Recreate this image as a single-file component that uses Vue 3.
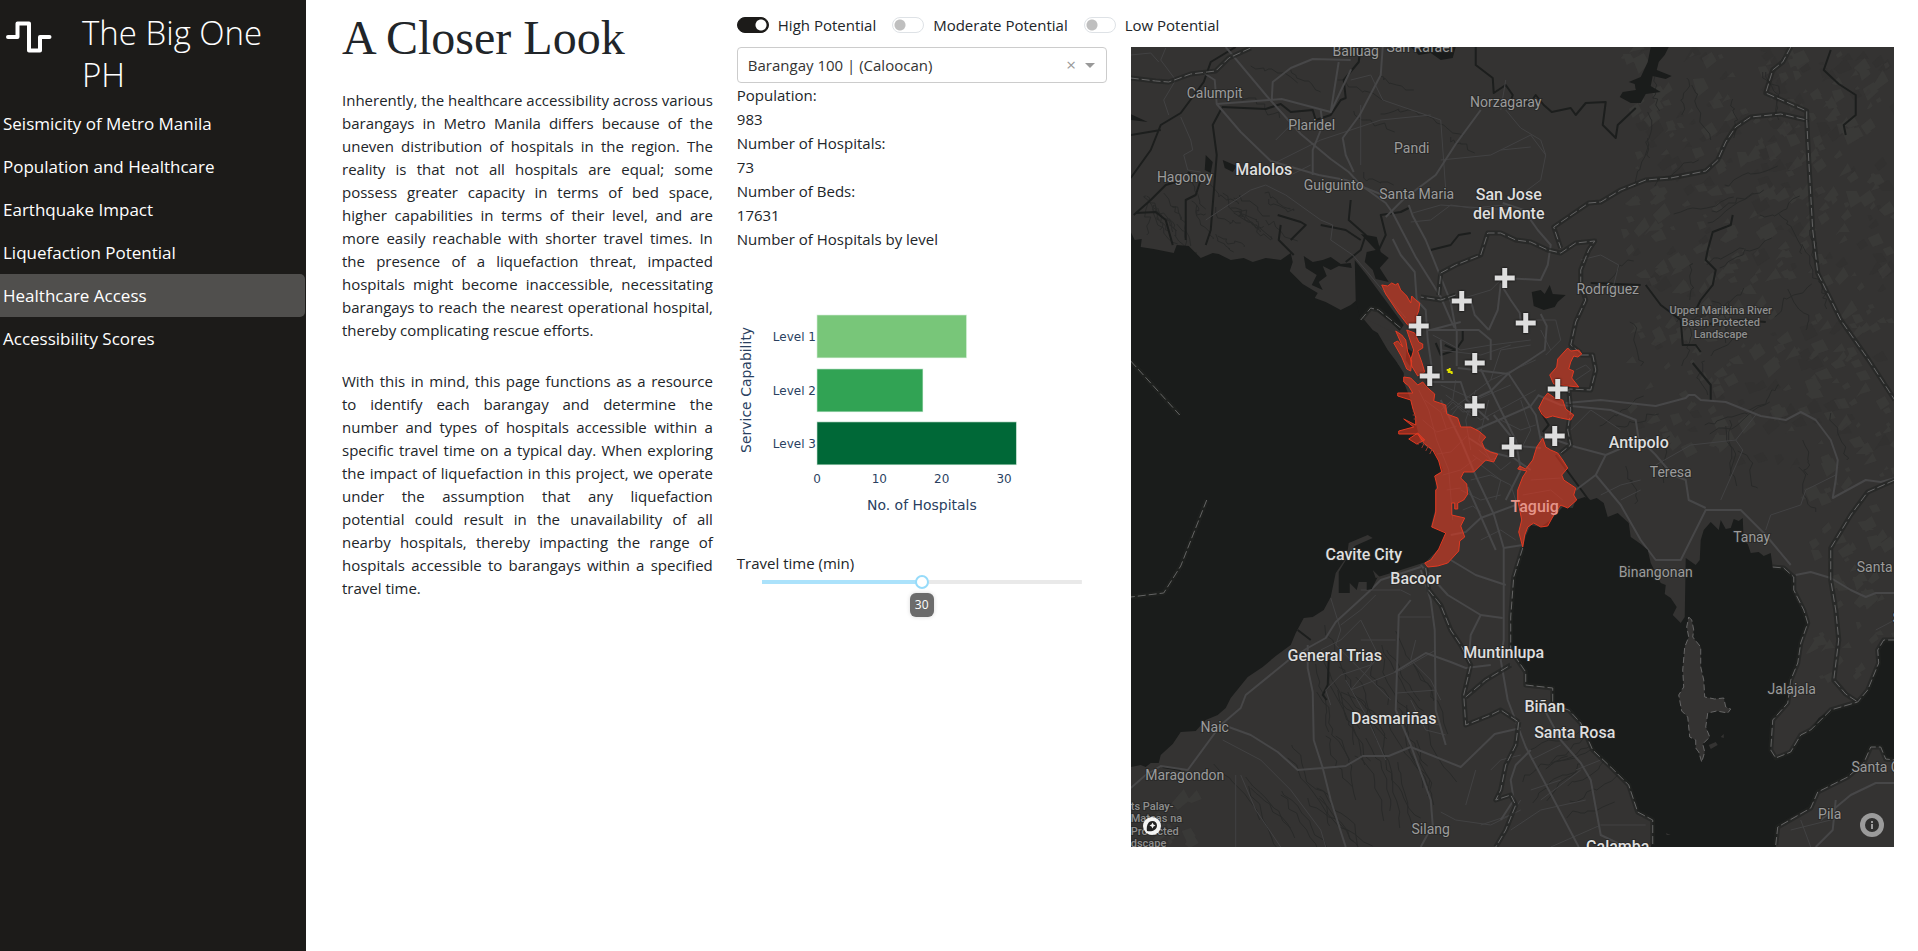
<script setup>
import { ref, computed } from 'vue'

const navItems = [
  'Seismicity of Metro Manila',
  'Population and Healthcare',
  'Earthquake Impact',
  'Liquefaction Potential',
  'Healthcare Access',
  'Accessibility Scores',
]
const activeItem = 'Healthcare Access'

const paragraphs = [
  [
    'Inherently, the healthcare accessibility across various',
    'barangays in Metro Manila differs because of the',
    'uneven distribution of hospitals in the region. The',
    'reality is that not all hospitals are equal; some',
    'possess greater capacity in terms of bed space,',
    'higher capabilities in terms of their level, and are',
    'more easily reachable with shorter travel times. In',
    'the presence of a liquefaction threat, impacted',
    'hospitals might become inaccessible, necessitating',
    'barangays to reach the nearest operational hospital,',
    'thereby complicating rescue efforts.',
  ],
  [
    'With this in mind, this page functions as a resource',
    'to identify each barangay and determine the',
    'number and types of hospitals accessible within a',
    'specific travel time on a typical day. When exploring',
    'the impact of liquefaction in this project, we operate',
    'under the assumption that any liquefaction',
    'potential could result in the unavailability of all',
    'nearby hospitals, thereby impacting the range of',
    'hospitals accessible to barangays within a specified',
    'travel time.',
  ],
]

const toggles = ref([
  { id: 'high', label: 'High Potential', on: true },
  { id: 'moderate', label: 'Moderate Potential', on: false },
  { id: 'low', label: 'Low Potential', on: false },
])

const barangay = ref('Barangay 100 | (Caloocan)')
const travelTime = ref(30)
const travelShare = computed(() => (travelTime.value / 60) * 100 + '%')

const stats = [
  { label: 'Population:', value: '983' },
  { label: 'Number of Hospitals:', value: '73' },
  { label: 'Number of Beds:', value: '17631' },
]

const bars = [
  { label: 'Level 1', count: 24, y: 64, fill: '#78c679' },
  { label: 'Level 2', count: 17, y: 118, fill: '#31a354' },
  { label: 'Level 3', count: 32, y: 171, fill: '#006837' },
]
const ticks = [0, 10, 20, 30]
const unit = 6.24

const cities = [
  { t: 'Malolos', x: 1263, y: 175 },
  { t: 'San Jose', x: 1508, y: 200 },
  { t: 'del Monte', x: 1508, y: 219 },
  { t: 'Antipolo', x: 1638, y: 448 },
  { t: 'Taguig', x: 1534, y: 512, dim: true },
  { t: 'Cavite City', x: 1363, y: 560 },
  { t: 'Bacoor', x: 1415, y: 584 },
  { t: 'General Trias', x: 1334, y: 661 },
  { t: 'Muntinlupa', x: 1503, y: 658 },
  { t: 'Dasmariñas', x: 1393, y: 724 },
  { t: 'Biñan', x: 1544, y: 712 },
  { t: 'Santa Rosa', x: 1574, y: 738 },
  { t: 'Calamba', x: 1617, y: 852 },
]
const towns = [
  { t: 'Baliuag', x: 1355, y: 56 },
  { t: 'San Rafael', x: 1419, y: 52 },
  { t: 'Calumpit', x: 1214, y: 98 },
  { t: 'Norzagaray', x: 1505, y: 107 },
  { t: 'Plaridel', x: 1311, y: 130 },
  { t: 'Pandi', x: 1411, y: 153 },
  { t: 'Hagonoy', x: 1184, y: 182 },
  { t: 'Guiguinto', x: 1333, y: 190 },
  { t: 'Santa Maria', x: 1416, y: 199 },
  { t: 'Rodríguez', x: 1607, y: 294 },
  { t: 'Teresa', x: 1670, y: 477 },
  { t: 'Tanay', x: 1751, y: 542 },
  { t: 'Binangonan', x: 1655, y: 577 },
  { t: 'Santa', x: 1874, y: 572 },
  { t: 'S', x: 1896, y: 623 },
  { t: 'Jalajala', x: 1791, y: 694 },
  { t: 'Santa C', x: 1875, y: 772 },
  { t: 'Pila', x: 1829, y: 819 },
  { t: 'Naic', x: 1214, y: 732 },
  { t: 'Maragondon', x: 1184, y: 780 },
  { t: 'Silang', x: 1430, y: 834 },
]
const parks = [
  { t: 'Upper Marikina River', x: 1720, y: 314 },
  { t: 'Basin Protected', x: 1720, y: 326 },
  { t: 'Landscape', x: 1720, y: 338 },
]
const palay = [
  { t: 'ts Palay-', y: 810 },
  { t: 'Mataas na', y: 822 },
  { t: 'Protected', y: 835 },
  { t: 'dscape', y: 847 },
]

const hospitals = [
  [1504, 278], [1461, 301], [1418, 326], [1525, 323], [1474, 363],
  [1429, 376], [1557, 389], [1474, 406], [1554, 436], [1511, 447],
]

const bay = 'M1130 232 1134 240 1141 239 1140 247 1153 249 1173 253 1176 245 1188 246 1200 258 1212 253 1218 254 1230 260 1243 258 1252 262 1265 258 1280 260 1290 253 1292 262 1289 271 1302 284 1317 293 1314 298 1325 302 1340 310 1350 305 1356 300 1362 318 1372 330 1377 333 1387 350 1396 362 1403 373 1403 382 1410 400 1415 423 1420 443 1435 453 1442 470 1435 475 1435 507 1430 527 1445 532 1440 547 1425 562 1397 571 1377 577 1371 589 1366 590 1366 582 1358 582 1356 590 1349 583 1349 593 1338 593 1338 572 1350 552 1354 546 1372 538 1367 535 1348 543 1346 557 1335 573 1330 597 1323 610 1312 617 1303 618 1295 633 1290 645 1275 656 1262 667 1247 677 1230 698 1225 708 1217 715 1205 720 1195 731 1180 732 1172 744 1160 755 1158 763 1150 763 1145 767 1140 765 1130 767Z'
const lake = 'M1522 548 1513 577 1510 617 1510 650 1525 672 1525 685 1552 688 1550 705 1568 710 1580 723 1592 750 1610 767 1628 785 1637 812 1652 820 1652 840 1650 847H1775L1777 827 1790 818 1810 808 1817 792 1847 777 1863 763 1870 747 1880 747 1885 759 1894 760V640H1883L1877 650 1878 663 1867 690 1857 702 1847 706 1830 710 1818 718 1810 730 1800 735 1790 752 1775 758 1770 750 1772 720 1787 703 1790 680 1797 663 1800 643 1807 623 1803 610 1796 600 1793 590 1793 577 1783 568 1772 567 1770 553 1763 556 1758 552 1750 553 1747 544 1743 541 1742 518 1738 521 1733 519 1730 528 1725 529 1720 520 1718 530 1710 522 1703 530 1700 540 1699 560 1695 565 1685 558 1684 617 1680 623 1672 615 1676 607 1670 598 1664 594 1665 585 1660 583 1650 563 1647 550 1640 544 1630 537 1628 523 1617 513 1607 517 1603 503 1596 498 1590 500 1584 497 1575 500 1572 508 1562 507 1550 520 1540 527 1530 525 1525 536Z'
const talim = 'M1688 617 1691 620 1693 630 1692 637 1700 647 1700 667 1703 680 1704 697 1714 699 1723 698 1725 707 1730 709 1727 713 1716 711 1707 713 1705 727 1709 737 1702 744 1704 752 1701 762 1698 752 1695 748 1695 740 1689 737 1687 717 1681 711 1678 695 1683 687 1682 670 1684 647 1688 637 1686 627Z'

const liquefaction = [
  'M1381 285 1387 286 1391 283 1395 285 1397 283 1400 290 1406 296 1410 303 1411 296 1415 300 1419 303 1418 311 1415 318 1416 326 1407 325 1397 312 1385 294Z',
  'M1406 330 1414 333 1418 342 1422 344 1422 348 1417 351 1421 362 1424 372 1417 376 1411 366 1410 360 1413 350 1410 342Z',
  'M1395 331 1401 335 1405 340 1407 352 1411 361 1410 371 1406 369 1401 357 1393 343 1397 341 1402 347Z',
  'M1403 377 1410 378 1417 385 1422 382 1427 388 1434 394 1433 401 1445 405 1446 414 1457 418 1460 427 1470 427 1478 431 1485 437 1481 442 1484 449 1490 452 1497 454 1493 462 1485 460 1479 466 1473 472 1463 472 1460 478 1466 484 1467 494 1463 500 1457 503 1457 509 1454 509 1454 503 1451 503 1451 515 1464 518 1460 526 1464 537 1459 541 1458 551 1447 563 1437 566 1427 567 1424 563 1430 560 1438 549 1445 533 1431 527 1435 512V490L1437 488 1434 476 1441 472 1438 461 1432 450 1424 444 1417 434 1398 434V431L1413 427 1403 419 1415 425V417L1412 408 1410 400 1397 396V393H1412L1408 386 1403 382Z',
  'M1417 433 1424 440 1416 444 1408 439Z',
  'M1567 348 1570 351 1578 350 1581 354 1577 357 1573 356 1570 362 1568 369 1573 371 1571 378 1578 387 1568 386 1553 384 1549 375 1556 367 1557 359Z',
  'M1547 393 1554 398 1562 400 1565 409 1573 415 1570 420 1560 418 1552 416 1545 418 1541 414 1538 408 1543 398Z',
  'M1542 438 1545 447 1550 450 1557 453 1562 460 1567 468 1561 475 1563 480 1575 488 1573 495 1576 500 1567 508 1560 505 1553 515 1547 526 1540 527 1533 523 1527 527 1524 535 1522 547 1518 532 1521 520 1517 500 1517 490 1522 477 1526 471 1517 469 1519 466 1525 469 1532 460 1536 447Z',
]

const majorRoads = [
  'M1225 47 1266 96 1300 134 1330 159 1348 172 1360 185 1385 203 1392 213 1415 257 1440 297 1450 320 1454 328',
  'M1203 73 1214 80 1216 104 1240 132 1270 161 1318 175 1345 180 1382 195',
  'M1216 104 1281 99 1330 112M1330 112 1350 70 1330 112 1338 62M1350 60 1312 59 1290 68 1272 82 1271 100M1382 47 1380 75 1359 115 1342 138 1345 155 1353 172',
  'M1312 175V150L1322 125 1320 110M1480 110 1455 144 1435 175 1415 190 1402 200 1385 217',
  'M1408 205 1412 216 1425 240 1450 302 1455 329M1392 239 1400 255 1414 272 1416 300 1425 310 1427 340 1432 374',
  'M1460 322 1430 330M1427 330H1478L1490 340V360',
  'M1488 330 1474 315 1470 300M1504 278 1540 280 1547 265 1550 245 1537 230 1523 210 1502 203',
  'M1488 330 1497 310 1500 284 1510 300 1519 313 1520 322M1540 314 1546 326 1544 350 1529 360 1507 374 1490 391 1475 398',
  'M1457 368 1508 374 1535 415 1540 440M1431 382H1460L1466 400 1488 420M1456 330V366M1440 340 1442 380',
  'M1480 369 1500 410 1515 440 1520 470 1505 500M1475 430 1530 406 1538 395',
  'M1440 400 1460 440 1476 478 1493 514 1503 548V640L1500 660 1507 700 1525 747 1548 790 1578 847',
  'M1503 548 1522 545M1467 487 1495 550M1450 535 1465 532 1480 518 1515 505',
  'M1468 438 1490 452 1513 458 1530 470M1493 415 1518 446 1540 448',
  'M1370 590 1380 580 1420 567M1410 600 1398 615 1395 710 1410 745 1430 800 1432 825 1420 847',
  'M1370 590 1335 622 1325 638 1307 648 1288 660 1245 695 1240 708 1220 725 1187 770 1160 766 1145 775 1130 788',
  'M1307 645V668L1312 692 1313 740 1322 768 1330 800 1345 847M1228 727 1250 735 1277 752 1297 770 1322 768 1345 766 1362 756 1388 756 1410 747 1460 767 1494 734 1520 728',
  'M1420 570 1430 600 1434 630 1435 710 1445 745M1450 560 1475 575 1505 585M1420 565 1447 595 1480 615 1502 618',
  'M1480 615 1470 635 1468 660M1394 672 1425 653 1450 662 1465 668 1490 665',
  'M1540 437 1555 440 1575 447 1605 455 1640 440 1655 455 1672 475 1685 480 1688 500 1705 508',
  'M1605 455 1595 475 1575 490M1595 475 1620 505 1640 540 1655 560 1680 560 1690 540 1705 510 1740 510 1765 535 1790 565',
  'M1565 403 1600 400 1655 406 1685 398 1688 395 1694 395 1700 400 1725 402 1745 410 1760 416 1785 420 1800 412 1815 420 1830 440 1837 460 1835 480 1832 498 1865 480 1880 482 1894 478',
  'M1537 395 1560 405 1610 410 1635 420 1638 440',
  'M1545 712 1560 740 1580 763 1590 780 1600 835 1625 847M1530 750 1515 765 1510 780 1513 800 1500 820',
  'M1820 820 1850 795 1875 783 1894 783M1835 800 1832 830 1815 847M1795 575 1810 572 1830 578 1850 590 1865 597 1875 593 1894 593',
]
const minorRoads = [
  'M1165 48 1160 60 1175 80 1163 100 1168 115M1130 55 1150 53 1158 62M1180 117 1190 140 1192 150 1183 155 1187 170 1200 172',
  'M1205 220 1250 190 1265 185 1285 195 1320 220 1332 225 1330 240 1352 255 1365 270 1405 318',
  'M1270 165 1320 140 1380 120 1430 115M1275 140 1290 125M1290 175 1310 165M1350 80 1370 75 1382 100 1440 120 1445 190',
  'M1360 165V105M1412 213 1440 205 1510 210M1410 222 1430 220 1450 205M1440 160 1490 155 1530 135 1545 155 1540 180 1520 195',
  'M1505 110 1520 128 1540 140 1545 155M1505 80 1500 110M1450 205 1470 208 1505 205M1500 150 1530 147',
  'M1432 335 1460 350 1490 345 1530 340M1490 380 1500 350 1530 345M1450 302 1490 290 1500 280',
  'M1440 385 1475 400 1510 385M1445 395 1480 420 1535 390M1450 410 1490 380 1535 360',
  'M1475 390 1465 420 1470 450M1488 400 1478 440 1490 460M1455 380 1452 400 1440 410M1440 350 1480 355 1510 345',
  'M1470 480 1490 475 1510 485 1515 500M1480 465 1500 480 1495 500M1460 490 1480 500 1500 495M1480 540 1500 530 1515 540',
  'M1535 320 1555 320 1560 340 1545 355M1540 330 1550 350M1520 400 1530 430 1520 450M1500 420 1520 430 1535 425',
  'M1580 260 1600 255 1618 265 1613 285 1590 290M1575 380 1590 370 1585 365 1575 370',
  'M1443 412 1452 402 1462 412 1475 410M1449 418 1458 406 1470 416M1472 455 1482 462 1496 458M1478 450 1488 458 1500 470 1510 462M1462 510 1472 506 1480 512',
  'M1418 390 1428 410 1436 440 1448 470 1452 520M1424 400 1440 412 1446 430M1422 420 1436 432 1456 426M1430 455 1450 452 1466 436M1442 475 1460 470 1476 458M1446 490 1460 488M1530 480 1560 478M1522 495 1550 490 1562 500',
  'M1360 590 1400 590 1410 595M1340 625 1360 610 1375 595M1320 650 1340 640 1360 620 1375 650 1370 665 1340 675 1325 690 1330 705',
  'M1330 598 1340 630 1335 645 1390 700M1360 640H1395M1398 617 1430 617M1396 693 1436 690M1410 720 1440 725M1375 660 1350 690 1400 670 1435 650',
  'M1345 680 1365 715 1385 760M1415 640 1410 660 1430 680 1440 700M1410 700 1425 730 1445 735',
  'M1480 825 1510 815 1520 800M1440 812 1455 820 1490 825 1520 810M1490 770 1500 760 1520 755M1465 805 1475 770',
  'M1222 740 1260 760 1290 790 1320 830 1325 847M1235 775V847M1240 775 1255 810 1280 847',
  'M1530 790 1560 780M1540 800 1580 770M1510 830 1540 810 1585 800M1530 760 1560 745M1600 760 1575 770M1550 847 1600 825 1645 825',
  'M1570 430 1590 410 1620 430M1640 490 1620 500M1655 465 1690 445 1735 440 1755 415M1735 440 1742 450 1720 500M1640 480 1620 485 1600 495',
  'M1765 530 1770 515 1800 505 1805 490 1835 475M1875 630 1894 620M1800 820 1810 847M1790 830 1830 820',
]
const rivers = [
  'M1235 47 1210 62 1203 82 1180 113 1160 125 1150 150 1130 178M1130 135 1160 130M1221 108 1212 125 1216 155 1210 230 1205 245',
  'M1221 107 1265 109 1280 104 1290 112 1312 110 1315 120 1330 115 1340 100 1345 98 1343 80 1358 62 1360 47',
  'M1475 47 1475 65 1492 78 1493 93 1505 85 1512 95 1508 107 1530 102 1535 95 1543 105 1551 112 1570 108 1575 115 1585 103 1605 102 1602 125 1615 138 1617 125 1635 108',
  'M1645 285 1660 305 1680 320 1682 345 1695 345 1700 352M1692 363 1710 385 1710 400',
  'M1590 283 1640 285M1732 215 1730 225 1712 232 1707 250 1705 260 1715 270 1712 285 1700 300 1695 310M1700 325 1740 320 1765 322',
  'M1830 50 1823 70 1838 84 1855 95 1855 115 1843 125 1845 135',
  'M1408 208 1400 212 1380 215 1385 235 1378 250M1430 250 1450 245 1458 235 1470 233M1277 215 1300 222 1305 225 1290 240M1280 225 1278 240 1293 255M1350 200 1348 220 1365 235 1360 250 1345 262',
  'M1320 225 1345 230 1360 240M1133 215 1150 200 1165 185 1175 182M1135 213 1155 212 1165 220 1172 245M1187 172 1200 180 1195 195 1185 200 1185 240',
  'M1555 455 1588 500M1540 412 1548 425 1542 432',
  'M1297 630 1310 640M1328 660 1327 685 1322 695 1326 700M1162 767 1180 770',
  'M1444 345 1455 350M1435 343 1440 355 1455 350 1462 340 1462 330',
]
const boundaries = [
  'M1790 47 1782 62 1772 70 1765 93 1806 111V120L1780 114 1750 117 1735 127 1725 142 1717 160 1705 171 1670 178 1645 180 1620 190 1600 202 1588 203 1553 227 1560 248',
  'M1806 120 1808 160 1812 230 1817 273 1840 320 1868 360 1894 400',
  'M1130 78 1155 81 1168 82 1190 74 1215 71 1228 58 1250 48',
  'M1455 295 1440 300 1420 297M1438 295 1440 273 1455 265 1480 255 1487 233 1500 233 1515 240 1530 242 1547 250 1560 253 1575 243 1594 241 1588 250 1580 270 1580 285 1585 300 1575 322 1570 345 1580 353',
  'M1580 355 1592 355 1595 370 1590 390 1568 389 1570 410 1567 430 1570 445 1560 453',
  'M1894 480 1867 492 1850 515 1830 548V580L1835 610 1838 640 1833 680 1845 694 1857 702',
  'M1522 548 1513 577 1510 617V650L1525 672V685L1552 688V705L1568 710 1580 723 1592 750 1610 767 1628 785 1637 812 1652 820V845',
  'M1425 568 1428 590 1440 605 1450 630 1460 645 1470 665 1463 695 1465 725 1490 715 1500 710 1518 722M1465 697 1485 680 1510 665M1518 722 1515 745 1505 765 1500 790 1495 800 1510 795 1515 805 1505 830 1495 847',
  'M1772 567 1783 568 1793 577 1793 590 1803 610 1807 623 1800 643 1797 663 1790 680 1787 703 1772 720 1770 750 1775 758 1790 752 1800 735 1810 730 1830 710 1857 702 1867 690 1878 663 1877 650 1883 640H1894',
  'M1775 845 1777 827 1810 808 1817 792 1847 777 1863 763 1870 747H1880L1885 759 1894 760',
  'M1130 361 1179 415M1206 500 1180 566 1163 593 1130 597',
  'M1360 320 1370 308 1378 310 1400 328',
]

/* Seeded generator, so that the relief and creeks look the same on each load */
let seed = 11
function rnd() {
  seed = (seed * 16807) % 2147483647
  return seed / 2147483647
}
function facets(count, x0, y0, w, h) {
  return Array.from({ length: count }, () => {
    const x = x0 + rnd() * w
    const y = y0 + rnd() * h
    const a = 3 + rnd() * 9
    return `M${x.toFixed()} ${y.toFixed()}l${a.toFixed()} ${(-a * rnd() * 1.6).toFixed()} ${(a * 0.5).toFixed()} ${(a * 0.9).toFixed()} ${(-a).toFixed()} ${(a * rnd()).toFixed()}Z`
  }).join('')
}
function creeks(count, x0, y0, w, h, dx, dy) {
  return Array.from({ length: count }, () => {
    let d = `M${(x0 + rnd() * w).toFixed()} ${(y0 + rnd() * h).toFixed()}l`
    for (let i = 0; i < 9; i++) {
      d += `${(dx + (rnd() - 0.5) * 9).toFixed()} ${(dy + (rnd() - 0.5) * 9).toFixed()} `
    }
    return d
  }).join('')
}
const relief = facets(330, 1620, 50, 270, 400) + facets(60, 1800, 440, 90, 240) + facets(14, 1132, 800, 60, 45)
const deepRelief = facets(130, 1630, 50, 260, 420)
const streams =
  creeks(26, 1620, 60, 240, 420, 1, 5) +
  creeks(18, 1590, 180, 220, 260, 5, -3) +
  creeks(30, 1310, 620, 120, 150, 3, 7) +
  creeks(12, 1210, 740, 110, 60, 5, 6) +
  creeks(12, 1180, 60, 280, 140, 4, 2) +
  creeks(14, 1140, 165, 60, 60, 2, 3) +
  creeks(12, 1210, 190, 60, 50, 3, 2) +
  creeks(10, 1520, 740, 50, 80, 5, -3)
</script>

<template>
  <div class="page">
    <aside class="sidebar">
      <div class="brand">
        <svg class="logo" viewBox="0 0 46 34" aria-hidden="true">
          <path d="M2 17H11.500V3.500H23V30.500H34V17H43.500" />
        </svg>
        <h2>The Big One PH</h2>
      </div>
      <nav>
        <a
          v-for="item in navItems"
          :key="item"
          href="#"
          :class="{ active: item === activeItem }"
        >{{ item }}</a>
      </nav>
    </aside>

    <main>
      <section class="story">
        <h1>A Closer Look</h1>
        <p v-for="(lines, i) in paragraphs" :key="i">
          <span v-for="line in lines" :key="line">{{ line + ' ' }}</span>
        </p>
      </section>

      <section class="explorer">
        <div class="toggles">
          <label v-for="t in toggles" :key="t.id" :for="t.id">
            <input :id="t.id" v-model="t.on" type="checkbox" role="switch">
            <span>{{ t.label }}</span>
          </label>
        </div>

        <div class="panels">
          <div class="details">
            <div class="picker">
              <select v-model="barangay" aria-label="Barangay">
                <option>Barangay 100 | (Caloocan)</option>
              </select>
              <button type="button" aria-label="Clear selection">×</button>
              <svg class="caret" viewBox="0 0 10 5" aria-hidden="true"><path d="M0 0H10L5 5Z" /></svg>
            </div>

            <dl>
              <template v-for="s in stats" :key="s.label">
                <dt>{{ s.label }}</dt>
                <dd>{{ s.value }}</dd>
              </template>
            </dl>
            <div class="caption">Number of Hospitals by level</div>

            <svg class="chart" viewBox="0 0 370 300" role="img" aria-label="Number of hospitals by level">
              <g v-for="b in bars" :key="b.label">
                <rect x="80" :y="b.y" :width="b.count * unit" height="43" :fill="b.fill" />
                <text class="tick" x="79" :y="b.y + 26" text-anchor="end">{{ b.label }}</text>
              </g>
              <text
                v-for="n in ticks"
                :key="n"
                class="tick"
                :x="80 + n * unit"
                y="232"
                text-anchor="middle"
              >{{ n }}</text>
              <text class="axis" x="185" y="259" text-anchor="middle">No. of Hospitals</text>
              <text class="axis" transform="translate(14 139) rotate(-90)" text-anchor="middle">Service Capability</text>
            </svg>

            <label class="caption" for="travel">Travel time (min)</label>
            <div class="slider" :style="{ '--share': travelShare }">
              <input id="travel" v-model.number="travelTime" type="range" min="0" max="60">
              <output for="travel">{{ travelTime }}</output>
            </div>
          </div>

          <div class="map">
            <svg viewBox="1130 47 764 800" preserveAspectRatio="xMidYMid slice" role="img" aria-label="Map of Metro Manila">
              <rect class="land" x="1130" y="47" width="764" height="800" />
              <path class="deep" :d="deepRelief" />
              <path class="relief" :d="relief" />
              <path class="stream" :d="streams" />
              <path class="river" v-for="d in rivers" :key="d" :d="d" />
              <path class="minor" v-for="d in minorRoads" :key="d" :d="d" />
              <path class="major" v-for="d in majorRoads" :key="d" :d="d" />

              <g class="water">
                <path :d="bay" />
                <path :d="lake" />
                <path d="M1410 47 1418 55 1430 53 1440 60 1452 58 1455 47Z" />
                <path d="M1650 47 1668 47 1664 55 1658 62 1656 70 1671 76 1665 79 1652 76 1650 86 1660 92 1645 94 1640 103 1630 103 1619 97 1622 92 1635 90 1634 84 1628 82 1640 77 1647 62Z" />
                <path d="M1531 292 1540 290 1544 294 1549 285 1552 294 1565 295 1557 302 1554 307 1543 310 1533 306Z" />
                <path d="M1360 234 1376 237 1380 252 1388 258 1379 268 1388 282 1375 279 1372 270 1364 262 1366 252 1375 250Z" />
                <path d="M1354 260 1366 275 1403 325 1398 332 1385 322 1372 308 1360 320 1355 300Z" />
                <path d="M1303 256 1312 262 1322 260 1330 257 1340 264 1350 263 1351 268 1338 266 1330 270 1322 266 1326 276 1318 282 1322 290 1311 285 1316 275 1305 268Z" />
                <path d="M1222 160 1236 166 1232 172 1224 168ZM1205 155 1212 162 1210 173 1204 170ZM1130 114 1147 122 1130 120Z" />
                <path d="M1406 348 1412 352 1409 366 1405 360Z" />
              </g>
              <path class="land" :d="talim" />
              <path class="land" d="M1708 745 1715 742 1717 745 1710 749ZM1665 833 1670 835 1666 835ZM1720 737 1723 734 1723 738ZM1372 570 1379 577 1375 578Z" />
              <path class="land" d="M1363 318 1375 310 1390 322 1402 334 1396 334ZM1384 340 1390 341 1405 372 1398 365Z" />
              <path class="coast" :d="talim" />

              <path class="border-shade" v-for="d in boundaries" :key="'s' + d" :d="d" />
              <path class="border" v-for="d in boundaries" :key="d" :d="d" />

              <path class="risk" v-for="d in liquefaction" :key="d" :d="d" />
              <path class="pier" d="M1412 411h5M1412 415h5M1413 419h5M1420 440l-3 5M1424 442l-3 6M1428 445l-3 6M1432 448l-3 6" />
              <path class="selected" d="M1446 370h3v-2M1447 372h4v2M1448 369v3" />

              <g class="town">
                <text v-for="l in towns" :key="l.t + l.x" :x="l.x" :y="l.y">{{ l.t }}</text>
              </g>
              <g class="park">
                <text v-for="l in parks" :key="l.t" :x="l.x" :y="l.y">{{ l.t }}</text>
              </g>
              <g class="park start">
                <text v-for="l in palay" :key="l.t" x="1130" :y="l.y">{{ l.t }}</text>
              </g>
              <g class="city">
                <text v-for="l in cities" :key="l.t" :x="l.x" :y="l.y" :class="{ dim: l.dim }">{{ l.t }}</text>
              </g>

              <g class="crosses">
                <path v-for="h in hospitals" :key="h[0] + '-' + h[1]" :d="`M${h[0] - 10} ${h[1]}h20m-10 -10v20`" />
              </g>
            </svg>

            <a class="attribution-logo" href="#" aria-label="Map provider">
              <svg viewBox="0 0 18 18" aria-hidden="true">
                <circle cx="9" cy="9" r="9" fill="#f4f4f4" />
                <path d="M4 14C3 9 5 4 9.500 4A4.500 4.500 0 0 1 14 8.500C14 13 9 15 4 14Z" />
                <path d="M9.500 5.500 10.500 7.500 12.500 8.500 10.500 9.500 9.500 11.500 8.500 9.500 6.500 8.500 8.500 7.500Z" />
              </svg>
            </a>
            <button class="attribution-info" type="button" aria-label="Map information">
              <svg viewBox="0 0 24 24" aria-hidden="true">
                <circle cx="12" cy="12" r="12" fill="#9b9b9b" />
                <circle cx="12" cy="12" r="7" fill="#2f2f2e" />
                <path d="M11 11h2v5h-2zM11 8h2v2h-2z" />
              </svg>
            </button>
          </div>
        </div>
      </section>
    </main>
  </div>
</template>

<style>
body {
  margin: 0;
  background: #fff;
}
</style>

<style scoped>
.page {
  display: flex;
  min-height: 100vh;
  font-family: "Open Sans", "Noto Sans", sans-serif;
  font-size: 15px;
  line-height: 24px;
  color: #212529;
}
.page * {
  box-sizing: border-box;
}
.sidebar {
  flex: 0 0 306px;
  background: #1c1b19;
  color: #fff;
}
.brand {
  display: flex;
  gap: 30px;
  padding: 12px 24px 6px 6px;
}
.logo {
  flex: none;
  width: 46px;
  height: 34px;
  margin-top: 8px;
  fill: none;
  stroke: #fff;
  stroke-width: 4;
  stroke-linecap: round;
  stroke-linejoin: round;
}
.brand h2 {
  margin: 0;
  font-size: 33px;
  line-height: 42px;
  font-weight: 300;
}
nav {
  display: flex;
  flex-direction: column;
  padding-right: 1px;
}
nav a {
  padding: 8px 3px;
  font-size: 17px;
  line-height: 27px;
  color: #fff;
  text-decoration: none;
  border-radius: 0 5px 5px 0;
}
nav a.active {
  background: #504f4d;
}
main {
  flex: 1;
  display: flex;
  align-items: flex-start;
  min-width: 0;
  padding: 0 12px 0 24px;
}
.story {
  flex: 0 0 25%;
  padding: 9px 12px 0;
}
.story h1 {
  margin: 0 0 22px;
  font-family: "Liberation Serif", serif;
  font-size: 48px;
  line-height: 58px;
  font-weight: 400;
}
.story p {
  margin: 0 0 28px;
  line-height: 23px;
}
.story span {
  display: block;
  text-align: justify;
  text-align-last: justify;
  white-space: nowrap;
}
.story span:last-child {
  text-align-last: start;
}
.explorer {
  flex: 1;
  min-width: 0;
}
.toggles {
  display: flex;
  gap: 16px;
  padding: 13px 12px 10px;
}
.toggles label {
  display: flex;
  align-items: center;
  gap: 9px;
}
.toggles input {
  appearance: none;
  width: 32px;
  height: 16px;
  margin: 0;
  border: 1px solid #dee2e6;
  border-radius: 8px;
  background: radial-gradient(circle at 7px 7px, #bfbfbf 5px, transparent 6px) #fff;
}
.toggles input:checked {
  border-color: #1c1b19;
  background: radial-gradient(circle at 23px 7px, #fff 5px, transparent 6px) #1c1b19;
}
.panels {
  display: flex;
  align-items: flex-start;
}
.details {
  flex: 1;
  min-width: 0;
  padding: 0 12px;
}
.picker {
  display: flex;
  align-items: center;
  height: 36px;
  padding: 0 11px 0 10px;
  border: 1px solid #ccc;
  border-radius: 4px;
}
.picker select {
  flex: 1;
  min-width: 0;
  appearance: none;
  padding: 0;
  border: 0;
  background: none;
  font: inherit;
  color: #333;
}
.picker button {
  width: 17px;
  margin-right: 5px;
  padding: 0;
  border: 0;
  background: none;
  font: inherit;
  font-size: 17px;
  color: #999;
}
.caret {
  width: 10px;
  height: 5px;
  fill: #999;
}
dl,
dd {
  margin: 0;
}
.caption {
  display: block;
}
.chart {
  display: block;
  width: 100%;
}
.chart rect {
  stroke: #e5f5e9;
  stroke-opacity: 0.6;
}
.chart text {
  font-family: "DejaVu Sans", sans-serif;
  fill: #2a3f5f;
}
.tick {
  font-size: 12px;
}
.axis {
  font-size: 14px;
}
.slider {
  position: relative;
  height: 14px;
  margin: 0 25px;
}
.slider input {
  appearance: none;
  display: block;
  width: 100%;
  height: 14px;
  margin: 0;
  background: linear-gradient(to right, #abe2fb var(--share), #e9e9e9 var(--share)) center / 100% 4px no-repeat;
}
.slider input::-webkit-slider-thumb {
  appearance: none;
  width: 14px;
  height: 14px;
  border: 2px solid #96dbfa;
  border-radius: 50%;
  background: #fff;
}
.slider output {
  position: absolute;
  top: 18px;
  left: var(--share);
  width: 24px;
  margin-left: -12px;
  border-radius: 6px;
  background: #6c6c6c;
  box-shadow: 0 0 4px #d9d9d9;
  font-size: 12px;
  line-height: 24px;
  text-align: center;
  color: #fff;
}
.map {
  position: relative;
  flex: 0 0 66.6667%;
  padding: 0 12px;
}
.map > svg {
  display: block;
  width: 100%;
  height: 800px;
}
.map path {
  fill: none;
  stroke-linejoin: round;
}
.map .land {
  fill: #343332;
}
.map .water path {
  fill: #1a1c1b;
}
.map .relief {
  fill: #444442;
  fill-opacity: 0.35;
}
.map .deep {
  fill: #2c2d2c;
  fill-opacity: 0.25;
}
.map .stream {
  stroke: #292a29;
}
.map .river {
  stroke: #1c1e1d;
  stroke-width: 2;
}
.map .minor {
  stroke: #424243;
}
.map .major {
  stroke: #474748;
  stroke-width: 2;
}
.map .coast {
  stroke: #666;
  stroke-dasharray: 6 3;
}
.map .border-shade {
  stroke: #222322;
  stroke-width: 5;
  stroke-opacity: 0.6;
}
.map .border {
  stroke: #646464;
  stroke-dasharray: 8 3;
}
.map .risk {
  fill: #f03b20;
  fill-opacity: 0.55;
  stroke: #e23a22;
}
.map .pier {
  stroke: #98382b;
}
.map .selected {
  stroke: #dede00;
  stroke-width: 2;
}
.map text {
  font-family: Roboto, sans-serif;
  text-anchor: middle;
  paint-order: stroke;
  stroke: #242524;
  stroke-width: 2;
  stroke-opacity: 0.7;
}
.city text {
  font-size: 16px;
  font-weight: 500;
  fill: #dedede;
}
.city .dim {
  fill: #e5958a;
  stroke-opacity: 0;
}
.town text {
  font-size: 14px;
  fill: #9b9b9b;
}
.park text {
  font-size: 11px;
  font-weight: 500;
  fill: #8e8e8e;
}
.map .start text {
  text-anchor: start;
}
.map .crosses path {
  stroke: #dedede;
  stroke-width: 5;
  filter: drop-shadow(0 0 1px #000);
}
.attribution-logo,
.attribution-info {
  position: absolute;
  padding: 0;
  border: 0;
  background: none;
}
.attribution-logo {
  left: 24px;
  bottom: 12px;
  width: 18px;
  height: 18px;
}
.attribution-info {
  right: 22px;
  bottom: 10px;
  width: 24px;
  height: 24px;
}
.attribution-logo svg,
.attribution-info svg {
  display: block;
}
.attribution-logo path {
  fill: #222;
}
.attribution-logo path + path {
  fill: #f4f4f4;
}
.attribution-info path {
  fill: #9b9b9b;
}
</style>
